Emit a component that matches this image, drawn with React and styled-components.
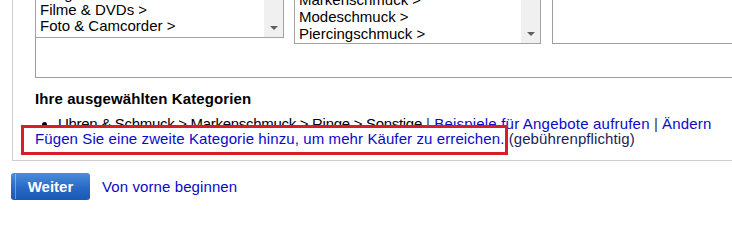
import React from 'react'
import styled, { createGlobalStyle } from 'styled-components'

const GlobalStyle = createGlobalStyle`
  html, body {
    margin: 0;
    padding: 0;
    background: #fff;
    overflow: hidden;
  }
  body {
    font-family: "Liberation Sans", Arial, sans-serif;
    font-size: 15px;
    color: #000;
  }
`

const linkBlue = '#0a0ac8'

const Page = styled.div`
  margin-top: -51px;
  padding-left: 11px;
  width: 1000px;
`

const Frame = styled.div`
  margin-left: 1px;
  border-left: 1px solid #cdcdcd;
  border-bottom: 1px solid #cdcdcd;
  padding: 10px 0 14px 22px;
`

const PickerBox = styled.div`
  width: 830px;
  border: 1px solid #9d9d9d;
  padding-bottom: 33px;
  display: flex;
  align-items: flex-start;
`

const ListBox = styled.div`
  box-sizing: border-box;
  flex-shrink: 0;
  width: ${p => p.$width}px;
  height: ${p => p.$height}px;
  margin-left: ${p => p.$offset}px;
  border: 1px solid #a3a3a3;
  display: flex;
  overflow: hidden;
  background: #fff;
`

const Options = styled.div`
  flex: 1;
  display: flex;
  flex-direction: column;
  justify-content: flex-end;
  padding: 0 0 ${p => p.$padBottom}px 4px;
  line-height: ${p => p.$lineHeight}px;
  white-space: nowrap;
`

const ScrollTrack = styled.div`
  width: 19px;
  background: #f0f0f0;
  display: flex;
  flex-direction: column;
  justify-content: flex-end;
`

const ScrollArrow = styled.div`
  height: 19px;
  display: flex;
  align-items: center;
  justify-content: center;

  &::after {
    content: '';
    border-left: 4px solid transparent;
    border-right: 4px solid transparent;
    border-top: 4px solid #5e5e5e;
  }
`

const EmptyBox = styled.div`
  box-sizing: border-box;
  flex-shrink: 0;
  width: 300px;
  height: 84px;
  margin-left: 11px;
  border: 1px solid #9d9d9d;
  background: #fff;
`

const Heading = styled.div`
  margin-top: 12px;
  font-weight: bold;
  line-height: 17px;
  letter-spacing: 0.1px;
`

const SelectedList = styled.ul`
  margin: 9px 0 0;
  padding-left: 23px;
  line-height: 15px;
  white-space: nowrap;
`

const Path = styled.span`
  letter-spacing: -0.3px;
`

const Link = styled.a`
  color: ${linkBlue};
  text-decoration: none;
  letter-spacing: 0.2px;
  cursor: pointer;
`

const Sep = styled.span`
  color: #333;
`

const HintLine = styled.div`
  line-height: 15px;
  white-space: nowrap;
`

const HintLink = styled.a`
  position: relative;
  z-index: 1;
  color: ${linkBlue};
  text-decoration: none;
  letter-spacing: 0.1px;
  cursor: pointer;

  &::before {
    content: '';
    position: absolute;
    z-index: -1;
    left: -14px;
    right: -4px;
    top: -5px;
    bottom: -8px;
    border: 3px solid #d81e27;
    background: #fff;
  }
`

const Fee = styled.span`
  color: #1c1c5c;
  letter-spacing: 0.1px;
`

const Actions = styled.div`
  margin-top: 12px;
  display: flex;
  align-items: center;
  gap: 12px;
`

const PrimaryButton = styled.button`
  position: relative;
  width: 79px;
  height: 27px;
  border: none;
  border-radius: 3px;
  background: linear-gradient(#4a8edb, #2869c4 55%, #1a58b2);
  color: #fff;
  font-family: "Liberation Sans", Arial, sans-serif;
  font-size: 15px;
  font-weight: bold;
  cursor: pointer;

  &::before {
    content: '';
    position: absolute;
    left: 4px;
    top: 1px;
    bottom: 1px;
    width: 1px;
    background: rgba(255, 255, 255, 0.35);
  }
`

const TextLink = styled.a`
  color: ${linkBlue};
  font-size: 15px;
  text-decoration: none;
  letter-spacing: 0.1px;
  cursor: pointer;
`

function CategoryList({ items, width, height, offset = 0, lineHeight, padBottom }) {
  return (
    <ListBox $width={width} $height={height} $offset={offset}>
      <Options $lineHeight={lineHeight} $padBottom={padBottom}>
        {items.map(item => (
          <div key={item}>{item} &gt;</div>
        ))}
      </Options>
      <ScrollTrack>
        <ScrollArrow />
      </ScrollTrack>
    </ListBox>
  )
}

export default function App() {
  return (
    <>
      <GlobalStyle />
      <Page>
        <Frame>
          <PickerBox>
            <CategoryList
              items={['Computer', 'Drogerie & Kosmetik', 'Filme & DVDs', 'Foto & Camcorder']}
              width={249}
              height={78}
              offset={-1}
              lineHeight={16}
              padBottom={3}
            />
            <CategoryList
              items={['Herrenschmuck', 'Markenschmuck', 'Modeschmuck', 'Piercingschmuck']}
              width={247}
              height={84}
              offset={10}
              lineHeight={17}
              padBottom={1}
            />
            <EmptyBox />
          </PickerBox>

          <Heading>Ihre ausgewählten Kategorien</Heading>
          <SelectedList>
            <li>
              <Path>Uhren &amp; Schmuck &gt; Markenschmuck &gt; Ringe &gt; Sonstige</Path> <Sep>|</Sep>{' '}
              <Link>Beispiele für Angebote aufrufen</Link> <Sep>|</Sep> <Link>Ändern</Link>
            </li>
          </SelectedList>
          <HintLine>
            <HintLink>Fügen Sie eine zweite Kategorie hinzu, um mehr Käufer zu erreichen.</HintLink>{' '}
            <Fee>(gebührenpflichtig)</Fee>
          </HintLine>
        </Frame>

        <Actions>
          <PrimaryButton>Weiter</PrimaryButton>
          <TextLink>Von vorne beginnen</TextLink>
        </Actions>
      </Page>
    </>
  )
}
